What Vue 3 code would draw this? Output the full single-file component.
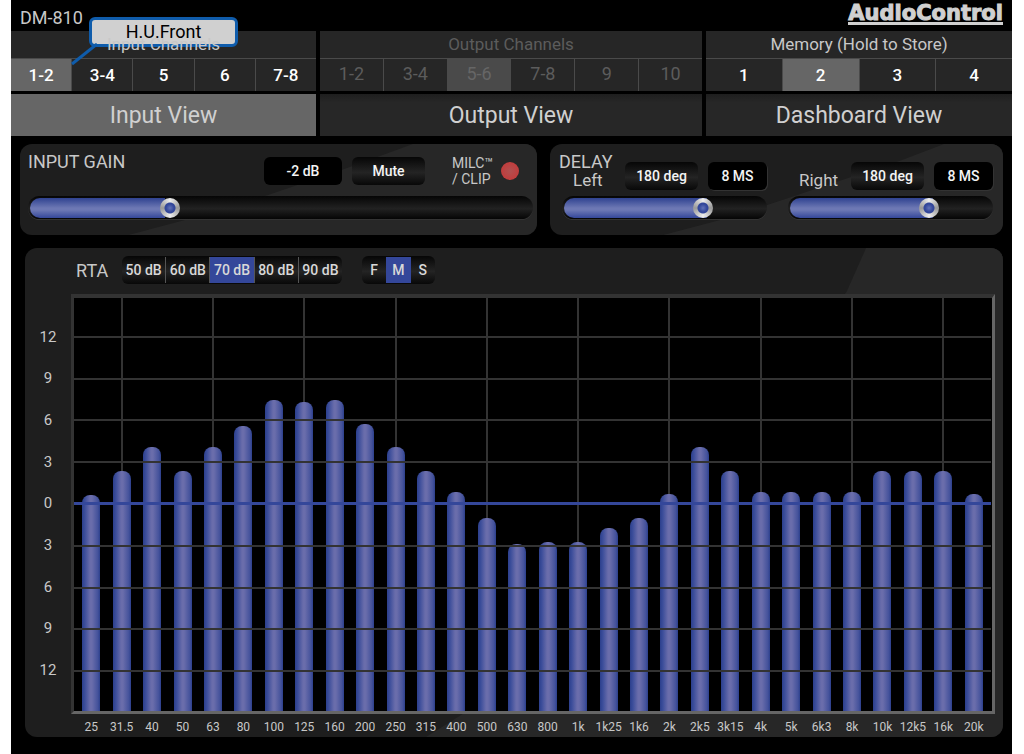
<template>
  <main class="device">
    <header class="topbar">
      <h1 class="model">DM-810</h1>
      <div class="logo">AudioControl</div>
    </header>

    <div class="banks">
      <section v-for="bank in banks" :key="bank.title" class="bank" :class="{ dimmed: bank.dimmed }">
        <div v-if="bank.callout" class="callout">
          <svg class="callout-tail" width="28" height="24" viewBox="0 0 28 24" aria-hidden="true">
            <path d="M1 21 L26 1" stroke="#0f5cab" stroke-width="3" fill="none" />
          </svg>
          <span class="callout-box">{{ bank.callout }}</span>
        </div>
        <h2 class="bank-title">{{ bank.title }}</h2>
        <div class="channels">
          <button
            v-for="(channel, i) in bank.channels"
            :key="channel"
            type="button"
            class="channel"
            :class="{ active: bank.active === i }"
            @click="bank.active = i"
          >
            {{ channel }}
          </button>
        </div>
        <button type="button" class="view" :class="{ active: view === bank.view }" @click="view = bank.view">
          {{ bank.view }}
        </button>
      </section>
    </div>

    <div class="controls">
      <section class="panel gain">
        <div class="control-row gain-row">
          <label class="heading" for="gain">INPUT GAIN</label>
          <output class="pill readout wide" for="gain">-2 dB</output>
          <button type="button" class="pill">Mute</button>
          <div class="clip">
            <span>MILC™<br />/ CLIP</span>
            <i class="led"></i>
          </div>
        </div>
        <input id="gain" v-model="gain" class="slider" type="range" min="0" max="100" :style="{ '--fill': gain + '%' }" />
      </section>

      <section class="panel delay">
        <div v-for="d in delays" :key="d.side" class="delay-side">
          <div class="control-row delay-row">
            <div class="delay-name">
              <h2 v-if="d.heading" class="heading">{{ d.heading }}</h2>
              <label :for="d.side">{{ d.side }}</label>
            </div>
            <button type="button" class="pill">180 deg</button>
            <output class="pill readout narrow" :for="d.side">8 MS</output>
          </div>
          <input :id="d.side" v-model="d.value" class="slider" type="range" min="0" max="100" :style="{ '--fill': d.value + '%' }" />
        </div>
      </section>
    </div>

    <section class="panel rta">
      <div class="toolbar">
        <h2 class="heading rta-title">RTA</h2>
        <div class="segments ranges">
          <button
            v-for="r in ranges"
            :key="r"
            type="button"
            :class="{ active: range === r }"
            @click="range = r"
          >
            {{ r }}
          </button>
        </div>
        <div class="segments speeds">
          <button
            v-for="s in speeds"
            :key="s"
            type="button"
            :class="{ active: speed === s }"
            @click="speed = s"
          >
            {{ s }}
          </button>
        </div>
      </div>

      <div class="chart">
        <div class="scale">
          <span v-for="(n, i) in scale" :key="i">{{ n }}</span>
        </div>
        <div class="plot">
          <div class="bars">
            <div v-for="(band, i) in bands" :key="band.hz" class="band" :class="{ marked: i % 3 === 1 }">
              <div class="bar" :style="{ height: (band.level / plotHeight) * 100 + '%' }"></div>
            </div>
          </div>
          <div class="lines">
            <i v-for="(n, i) in scale" :key="i" :class="{ zero: n === 0 }"></i>
          </div>
        </div>
        <div class="frequencies">
          <span v-for="band in bands" :key="band.hz">{{ band.hz }}</span>
        </div>
      </div>
    </section>
  </main>
</template>

<script setup>
import { ref } from 'vue'

const view = ref('Input View')
const gain = ref(27)
const range = ref('70 dB')
const speed = ref('M')

const ranges = ['50 dB', '60 dB', '70 dB', '80 dB', '90 dB']
const speeds = ['F', 'M', 'S']
const scale = [12, 9, 6, 3, 0, 3, 6, 9, 12]

const banks = ref([
  {
    title: 'Input Channels',
    channels: ['1-2', '3-4', '5', '6', '7-8'],
    active: 0,
    view: 'Input View',
    callout: 'H.U.Front',
  },
  {
    title: 'Output Channels',
    channels: ['1-2', '3-4', '5-6', '7-8', '9', '10'],
    active: 2,
    view: 'Output View',
    dimmed: true,
  },
  {
    title: 'Memory (Hold to Store)',
    channels: ['1', '2', '3', '4'],
    active: 1,
    view: 'Dashboard View',
  },
])

const delays = ref([
  { side: 'Left', heading: 'DELAY', value: 71 },
  { side: 'Right', value: 71 },
])

const plotHeight = 413

const bands = [
  { hz: '25', level: 216 },
  { hz: '31.5', level: 240 },
  { hz: '40', level: 264 },
  { hz: '50', level: 240 },
  { hz: '63', level: 264 },
  { hz: '80', level: 285 },
  { hz: '100', level: 311 },
  { hz: '125', level: 309 },
  { hz: '160', level: 311 },
  { hz: '200', level: 287 },
  { hz: '250', level: 264 },
  { hz: '315', level: 240 },
  { hz: '400', level: 219 },
  { hz: '500', level: 193 },
  { hz: '630', level: 167 },
  { hz: '800', level: 169 },
  { hz: '1k', level: 169 },
  { hz: '1k25', level: 183 },
  { hz: '1k6', level: 193 },
  { hz: '2k', level: 217 },
  { hz: '2k5', level: 264 },
  { hz: '3k15', level: 240 },
  { hz: '4k', level: 219 },
  { hz: '5k', level: 219 },
  { hz: '6k3', level: 219 },
  { hz: '8k', level: 219 },
  { hz: '10k', level: 240 },
  { hz: '12k5', level: 240 },
  { hz: '16k', level: 240 },
  { hz: '20k', level: 217 },
]
</script>

<style>
body {
  margin: 0;
  background: #fff;
}
</style>

<style scoped>
* {
  box-sizing: border-box;
}

.device {
  min-height: 100vh;
  margin: 0 12px 0 11px;
  padding-bottom: 17px;
  background: #000;
  color: #c8c8c8;
  font-family: Roboto, 'Liberation Sans', sans-serif;
  font-size: 17px;
}

h1,
h2 {
  margin: 0;
  font-weight: 400;
}

button {
  margin: 0;
  padding: 0;
  border: 0;
  font: inherit;
  color: inherit;
  cursor: pointer;
}

.topbar {
  display: flex;
  justify-content: space-between;
  align-items: flex-start;
  height: 31px;
  padding: 4px 9px 0;
}

.model {
  font-size: 18px;
  line-height: 28px;
}

.logo {
  border-bottom: 3px solid #d0d0d0;
  color: #d0d0d0;
  font-family: 'DejaVu Sans', sans-serif;
  font-size: 21px;
  font-weight: 700;
  line-height: 18px;
  -webkit-text-stroke: 1px #d0d0d0;
}

/* channel banks */
.banks {
  display: grid;
  grid-template-columns: 305fr 382fr 306fr;
  gap: 4px;
}

.bank {
  position: relative;
}

.bank-title {
  position: relative;
  height: 27px;
  font-size: 17px;
  line-height: 27px;
  text-align: center;
}

.bank::before {
  content: '';
  position: absolute;
  inset: 0 0 auto;
  height: 27px;
  background: #262626;
}

.channels {
  display: flex;
  border-top: 1px solid #4a4a4a;
}

.channel {
  flex: 1;
  height: 32px;
  background: #262626;
  color: #fff;
  font-weight: 500;
}

.channel + .channel {
  border-left: 1px solid #4a4a4a;
}

.channel.active {
  background: #666;
}

.dimmed .bank-title,
.dimmed .channel {
  color: #5c5c5c;
  font-weight: 400;
}

.dimmed .channel {
  padding-bottom: 3px;
  font-size: 18px;
}

.dimmed .channel.active {
  background: #4a4a4a;
  color: #666;
}

.view {
  display: block;
  width: 100%;
  height: 42px;
  margin-top: 3px;
  background: linear-gradient(#1e1e1e, #272727 20%);
  color: #d0d0d0;
  font-size: 23px;
}

.view.active {
  background: #666;
}

.callout {
  position: absolute;
  left: 60px;
  top: -14px;
}

.callout-box {
  display: block;
  width: 149px;
  margin-left: 18px;
  border: 3px solid #0f5cab;
  border-radius: 6px;
  background: #d0d0d0;
  color: #000;
  font-size: 18px;
  line-height: 24px;
  text-align: center;
}

.callout-tail {
  position: absolute;
  left: 0;
  top: 26px;
}

/* gain and delay panels */
.controls {
  display: grid;
  grid-template-columns: 517fr 453fr;
  gap: 13px;
  padding: 8px 9px 13px;
}

.panel {
  position: relative;
  z-index: 0;
  overflow: hidden;
  border-radius: 12px;
  background: #1e1e1e;
}

.panel::before {
  content: '';
  position: absolute;
  z-index: -1;
  inset: 0;
  background: #272727;
}

.gain::before {
  clip-path: polygon(21% 100%, 33% 82%, 48% 56%, 63% 27%, 76% 0, 100% 0, 100% 100%);
}

.delay::before {
  clip-path: polygon(25% 100%, 38% 83%, 48% 67%, 66% 37%, 77% 19%, 87% 0, 100% 0, 100% 100%);
}

.rta::before {
  clip-path: polygon(86% 0, 84% 9%, 45% 95%, 41% 100%, 100% 100%, 100% 0);
}

.gain {
  padding: 8px 4px 16px 8px;
}

.delay {
  display: grid;
  grid-template-columns: 1fr 1fr;
  gap: 15px;
  padding: 8px 7px 16px 9px;
}

.heading {
  font-size: 18px;
  line-height: 19px;
}

.control-row {
  display: flex;
  align-items: center;
  gap: 10px;
  height: 38px;
  margin-bottom: 6px;
}

.gain-row {
  padding-right: 14px;
}

.gain-row .heading {
  align-self: flex-start;
  margin-right: auto;
}

.delay-side {
  min-width: 0;
}

.delay-row {
  align-items: flex-end;
  padding-right: 3px;
}

.delay-name {
  flex: 1;
  line-height: 19px;
}

.delay-name label {
  display: block;
  padding-left: 14px;
}

.pill {
  width: 73px;
  height: 28px;
  border-radius: 6px;
  background: linear-gradient(#060606, #242424 55%, #080808);
  color: #f4f4f4;
  font-size: 14px;
  font-weight: 500;
  line-height: 28px;
  text-align: center;
}

.readout {
  background: #000;
}

.wide {
  width: 78px;
}

.narrow {
  width: 59px;
  box-shadow: 1px 1px 0 #333;
}

.clip {
  display: flex;
  align-items: center;
  gap: 8px;
  margin-left: 17px;
  font-size: 14px;
  line-height: 16px;
}

.led {
  width: 18px;
  height: 18px;
  border-radius: 50%;
  background: radial-gradient(#b05050, #c83434);
}

.slider {
  appearance: none;
  display: block;
  width: 100%;
  height: 23px;
  margin: 0;
  padding: 1px 2px;
  border-radius: 12px;
  background: linear-gradient(#050505, #222 55%, #050505);
  box-shadow: 0 1px 0 #333;
}

.delay-side .slider {
  width: calc(100% - 6px);
  margin: 0 3px;
}

.slider::-webkit-slider-runnable-track {
  height: 20px;
  border-radius: 10px;
  background: linear-gradient(#2f4290, #6d78b4 50%, #6d78b4 60%, #34479a) left / var(--fill) 100% no-repeat;
}

.slider::-webkit-slider-thumb {
  appearance: none;
  width: 20px;
  height: 20px;
  border: 0;
  border-radius: 50%;
  background:
    radial-gradient(circle, #6272b8 0, #33479a 4px, #33479a 5px, transparent 6px),
    conic-gradient(#eee, #999 25%, #eee 50%, #999 75%, #eee);
}

/* analyzer */
.rta {
  margin: 0 9px 0 14px;
  padding: 8px 8px 0 0;
}

.toolbar {
  display: flex;
  align-items: center;
  height: 28px;
  margin-bottom: 10px;
}

.rta-title {
  width: 46px;
  margin-left: 51px;
}

.segments {
  display: flex;
  overflow: hidden;
  height: 28px;
  padding: 1px 0;
  border-radius: 6px;
  background: linear-gradient(#060606, #242424 55%, #080808);
  color: #d8d8d8;
  font-size: 14px;
  font-weight: 500;
}

.segments button {
  flex: 1;
  background: none;
}

.segments .active {
  background: #34479a;
}

.ranges {
  width: 220px;
}

.ranges button + button {
  border-left: 1px solid #555;
}

.speeds {
  width: 73px;
  margin-left: 20px;
}

.chart {
  display: grid;
  grid-template-columns: 46px 1fr;
}

.scale,
.lines {
  display: grid;
  grid-template-rows: repeat(9, 1fr);
  align-items: center;
}

.scale {
  padding: 22px 0 23px;
  font-size: 15px;
  text-align: center;
}

.plot {
  position: relative;
  height: 420px;
  border: 3px solid #666;
  border-top: 4px solid #333;
  border-left-color: #333;
  background: #000;
}

.bars,
.frequencies {
  display: grid;
  grid-template-columns: repeat(30, minmax(0, 1fr));
}

.bars {
  height: 100%;
  padding: 0 3px 0 2px;
}

.band {
  display: flex;
  justify-content: center;
  align-items: flex-end;
}

.marked {
  background: linear-gradient(#333, #333) center / 2px 100% no-repeat;
}

.bar {
  width: 18px;
  border-radius: 8px 8px 0 0;
  background: linear-gradient(90deg, #2c3f8c, #3b4d9a 15%, #6a6dab 45%, #6a6dab 55%, #44529b 88%, #2c3f8c);
}

.lines {
  position: absolute;
  inset: 18px 1px 19px 0;
}

.lines i {
  height: 2px;
  background: #333;
}

.lines .zero {
  height: 3px;
  background: #34479a;
}

.frequencies {
  grid-column: 2;
  height: 23px;
  padding: 0 6px 0 5px;
  font-size: 12px;
  line-height: 26px;
  text-align: center;
}
</style>
